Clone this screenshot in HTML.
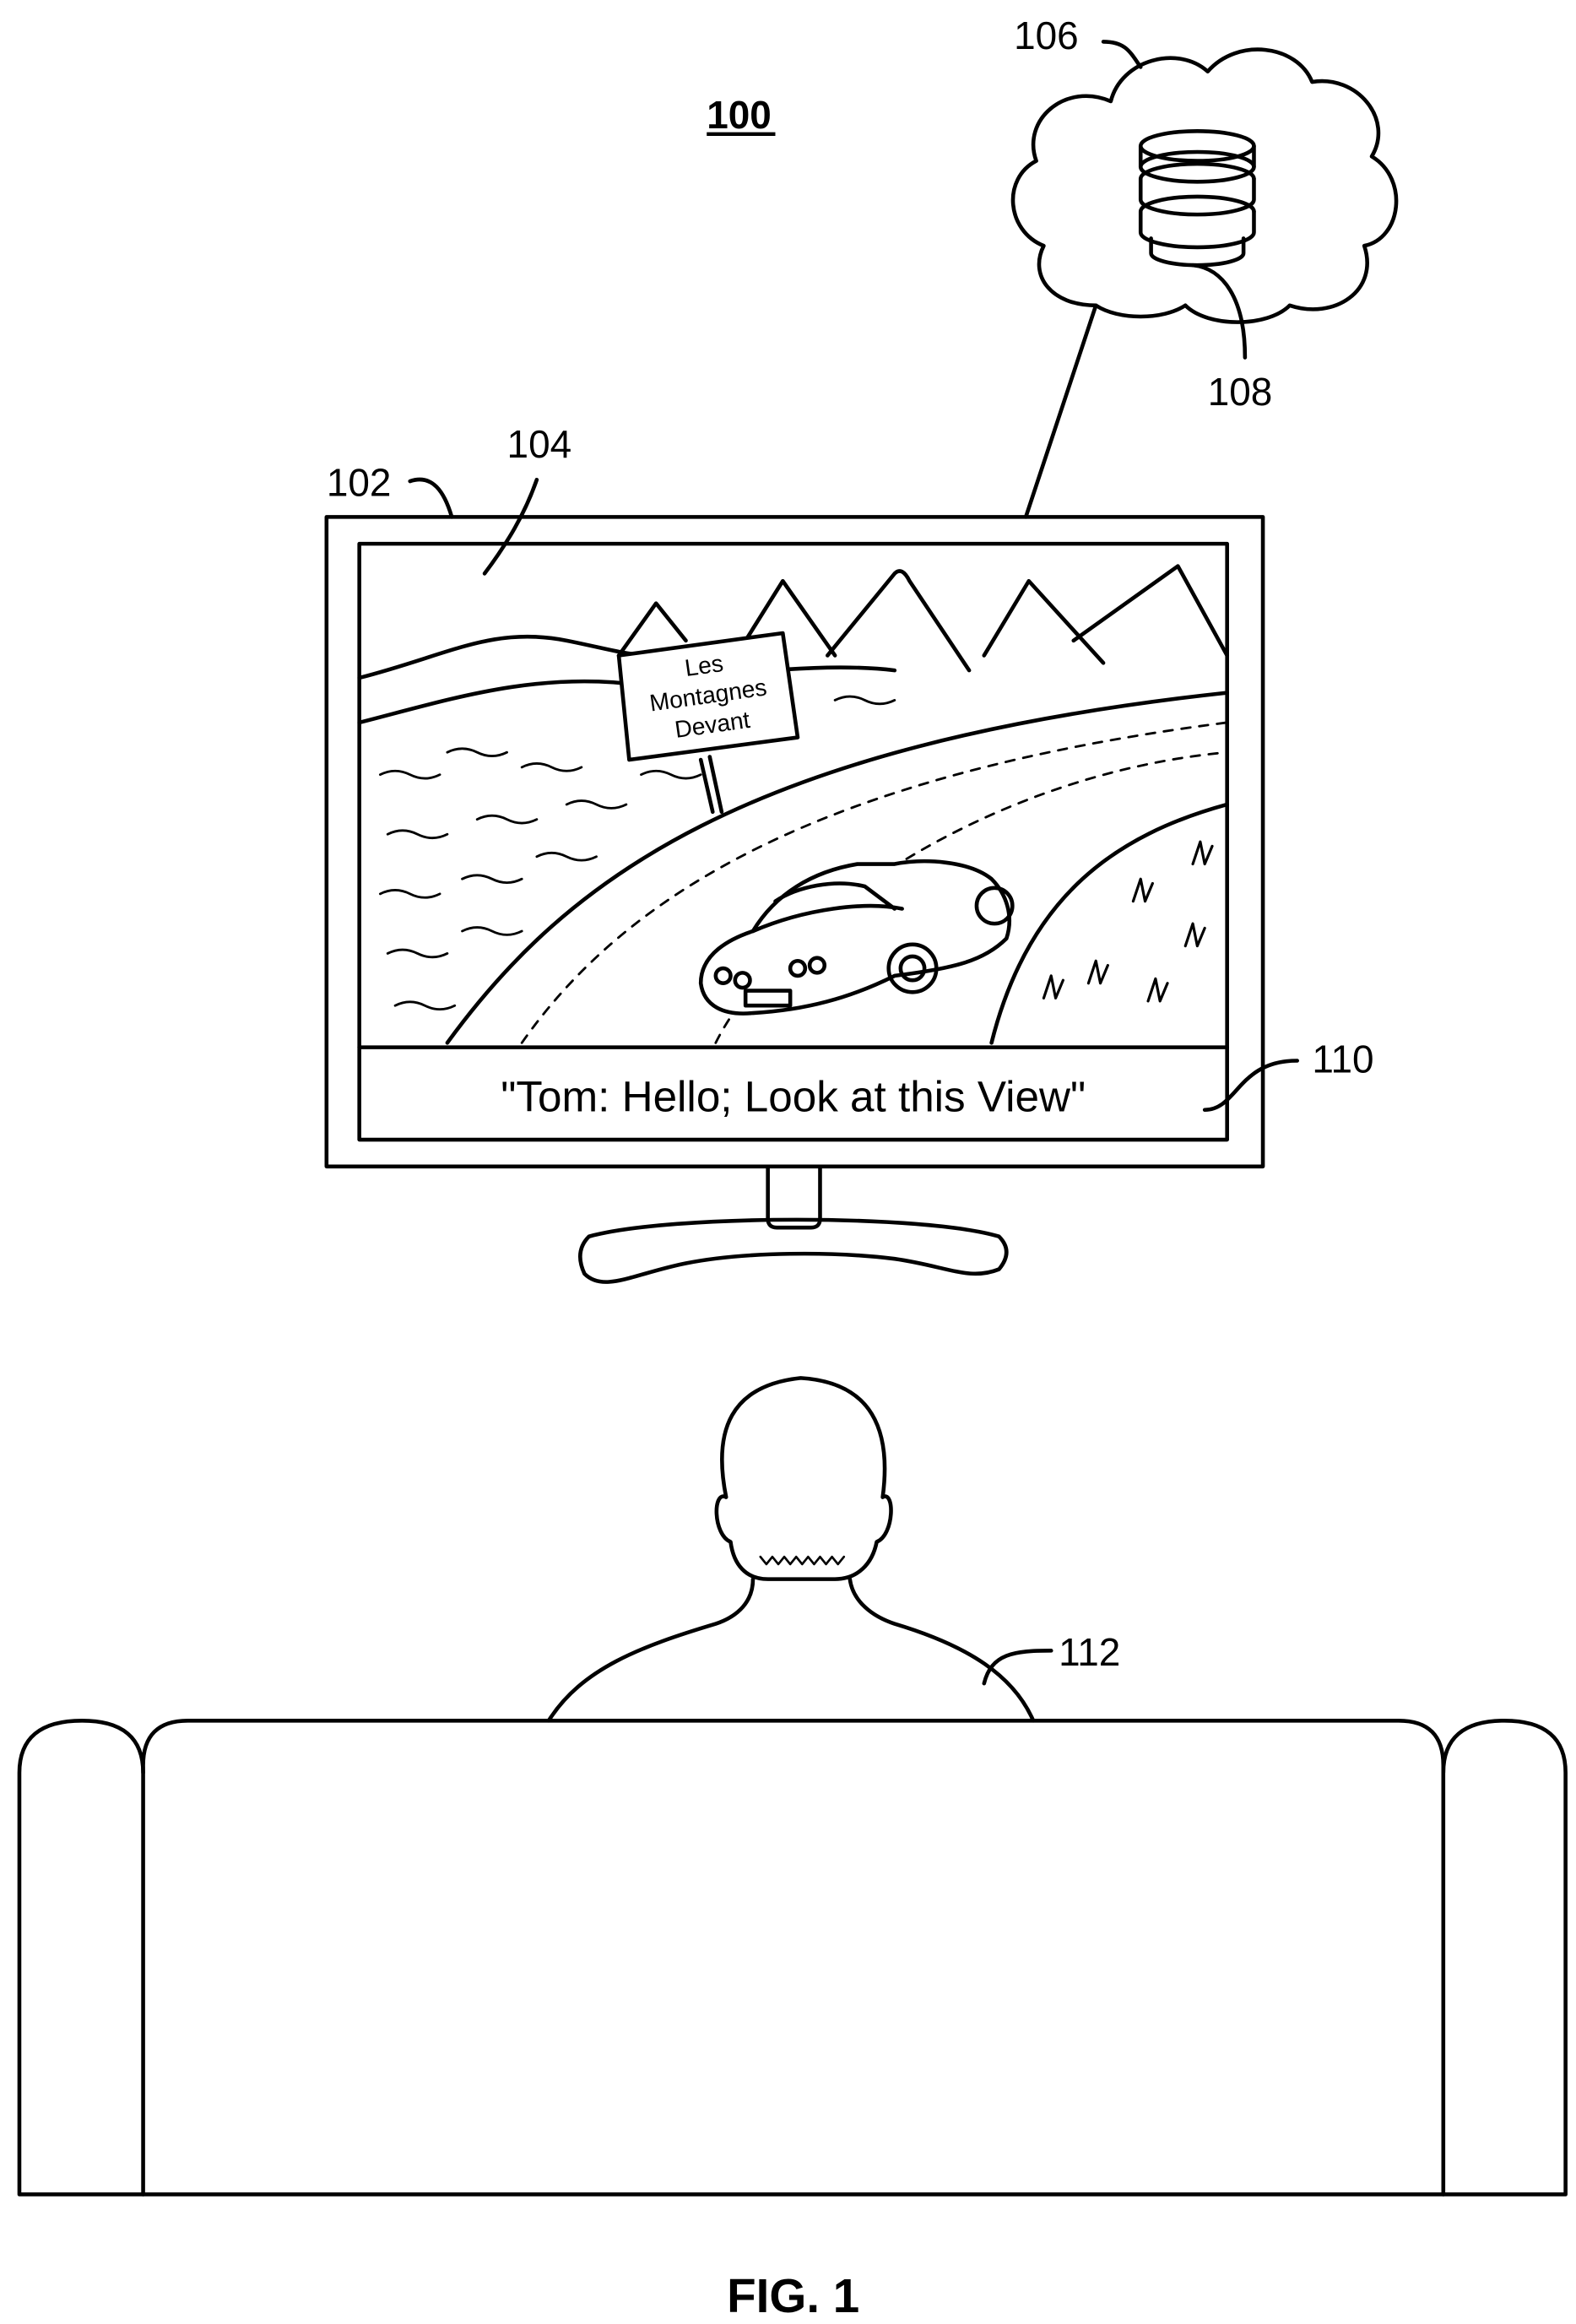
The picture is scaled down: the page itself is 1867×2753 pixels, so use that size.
<!DOCTYPE html>
<html><head><meta charset="utf-8"><style>
html,body{margin:0;padding:0;background:#fff;}
svg{display:block;}
text{font-family:"Liberation Sans",Arial,sans-serif;fill:#000;}
</style></head><body>
<svg width="1867" height="2753" viewBox="0 0 1057 1560" preserveAspectRatio="none" xmlns="http://www.w3.org/2000/svg">
<g fill="none" stroke="#000" stroke-width="2.6" stroke-linecap="round" stroke-linejoin="round">
<path d="M735,205 C705,205 690,185 700,165 C675,155 672,120 695,108 C685,80 715,55 745,68 C752,40 790,30 810,48 C830,25 870,30 880,55 C910,50 935,80 920,105 C945,120 940,160 915,165 C925,195 895,215 865,205 C850,220 810,220 795,205 C780,215 750,215 735,205 Z"/>
<ellipse cx="803" cy="98" rx="38" ry="10"/>
<path d="M765,98 v14 a38,10 0 0 0 76,0 v-14"/>
<path d="M765,112 a38,10 0 0 1 76,0"/>
<path d="M765,120 v14 a38,10 0 0 0 76,0 v-14"/>
<path d="M765,120 a38,10 0 0 1 76,0"/>
<path d="M765,142 v14 a38,10 0 0 0 76,0 v-14"/>
<path d="M765,142 a38,10 0 0 1 76,0"/>
<path d="M772,160 v10 a31,8 0 0 0 62,0 v-10"/>
<path d="M800,178 C820,180 835,200 835,240"/>
<path d="M740,28 C755,28 758,35 765,45"/>
<path d="M735,205 L688,347"/>
<path d="M275,323 C290,318 298,330 303,347"/>
<path d="M360,322 C352,345 340,365 325,385"/>
<path d="M808,745 C830,745 830,712 870,712"/>
<path d="M660,1130 C665,1110 680,1108 705,1108"/>
<rect x="219" y="347" width="628" height="436"/>
<rect x="241" y="365" width="582" height="400"/>
<line x1="241" y1="703" x2="823" y2="703"/>
<path d="M515,783 v35 q0,6 6,6 h23 q6,0 6,-6 v-35"/>
<path d="M395,830 C450,815 620,815 670,830 Q680,840 670,852 C650,860 635,850 600,845 C560,840 500,840 460,848 C425,855 405,868 392,855 Q385,840 395,830 Z"/>
<path d="M241,455 C300,440 330,420 380,430 C410,436 420,440 440,440"/>
<path d="M241,485 C300,470 360,450 430,460 C500,450 560,445 600,450"/>
<path d="M415,440 L440,405 L460,430 M500,430 L525,390 L560,440 M555,440 L600,385 Q605,380 610,390 L650,450 M660,440 L690,390 L740,445 M720,430 L790,380 L823,440"/>
<path d="M300,700 C380,590 500,500 823,465"/>
<path d="M665,700 C690,600 750,560 823,540"/>
<path d="M480,700 C520,620 660,520 823,505" stroke-dasharray="6,6" stroke-width="1.6"/>
<path d="M350,700 C420,600 550,520 823,485" stroke-dasharray="6,6" stroke-width="1.6"/>
<g stroke-width="1.6">
<path d="M255,520 q10,-5 20,0 t20,0 M300,505 q10,-5 20,0 t20,0 M350,515 q10,-5 20,0 t20,0 M260,560 q10,-5 20,0 t20,0 M320,550 q10,-5 20,0 t20,0 M380,540 q10,-5 20,0 t20,0 M430,520 q10,-5 20,0 t20,0 M255,600 q10,-5 20,0 t20,0 M310,590 q10,-5 20,0 t20,0 M360,575 q10,-5 20,0 t20,0 M260,640 q10,-5 20,0 t20,0 M310,625 q10,-5 20,0 t20,0 M265,675 q10,-5 20,0 t20,0 M560,470 q10,-5 20,0 t20,0"/>
</g>
<path d="M700,670 l5,-15 l3,15 l5,-12 M730,660 l5,-15 l3,15 l5,-12 M770,672 l5,-15 l3,15 l5,-12 M795,635 l5,-15 l3,15 l5,-12 M760,605 l5,-15 l3,15 l5,-12 M800,580 l5,-15 l3,15 l5,-12" stroke-width="1.8"/>
<path d="M470,510 L478,545 M476,508 L484,545"/>
<path d="M415,440 L525,425 L535,495 L422,510 Z" fill="#fff"/>
<path d="M470,660 C470,640 490,630 505,625 C520,600 545,585 575,580 L600,580 C620,576 650,578 665,590 C675,600 680,615 675,630 C660,645 640,650 600,655 C570,670 540,678 505,680 C485,682 472,675 470,660 Z" fill="#fff"/>
<path d="M505,625 C540,610 580,605 605,610 M520,605 C535,595 560,590 580,595 L600,610"/>
<circle cx="612" cy="650" r="16"/><circle cx="612" cy="650" r="8"/>
<circle cx="667" cy="608" r="12"/>
<circle cx="485" cy="655" r="5"/><circle cx="498" cy="658" r="5"/><circle cx="535" cy="650" r="5"/><circle cx="548" cy="648" r="5"/>
<rect x="500" y="665" width="30" height="10"/>
<path d="M487,1005 C478,960 490,930 537,925 C585,928 598,960 592,1005 C600,1000 600,1030 588,1035 C585,1050 575,1060 560,1060 L515,1060 C500,1060 492,1050 490,1035 C478,1030 478,1000 487,1005 Z"/>
<path d="M510,1045 l4,5 l4,-5 l4,5 l4,-5 l4,5 l4,-5 l4,5 l4,-5 l4,5 l4,-5 l4,5 l4,-5 l4,5 l4,-5" stroke-width="1.5"/>
<path d="M505,1060 C505,1075 495,1085 480,1090 C430,1105 390,1120 368,1155"/>
<path d="M570,1060 C572,1075 585,1085 600,1090 C650,1105 680,1125 693,1155"/>
<path d="M96,1473 V1185 Q96,1155 126,1155 H938 Q968,1155 968,1185 V1473"/>
<path d="M96,1473 H13 V1190 Q13,1155 55,1155 Q96,1155 96,1190"/>
<path d="M968,1473 H1050 V1190 Q1050,1155 1009,1155 Q968,1155 968,1190"/>
<line x1="96" y1="1473" x2="968" y2="1473"/>
</g>
<text x="474" y="86" font-size="26" font-weight="bold">100</text>
<line x1="474" y1="90" x2="520" y2="90" stroke="#000" stroke-width="2.5"/>
<text x="680" y="33" font-size="26">106</text>
<text x="810" y="272" font-size="26">108</text>
<text x="219" y="333" font-size="26">102</text>
<text x="340" y="307" font-size="26">104</text>
<text x="880" y="720" font-size="26">110</text>
<text x="710" y="1118" font-size="26">112</text>
<g font-size="16" text-anchor="middle" transform="rotate(-8 475 467)">
<text x="475" y="452">Les</text>
<text x="475" y="472">Montagnes</text>
<text x="475" y="492">Devant</text>
</g>
<text x="532" y="746" font-size="29" text-anchor="middle">"Tom: Hello; Look at this View"</text>
<text x="532" y="1552" font-size="32" font-weight="bold" text-anchor="middle">FIG. 1</text>
</svg>
</body></html>
